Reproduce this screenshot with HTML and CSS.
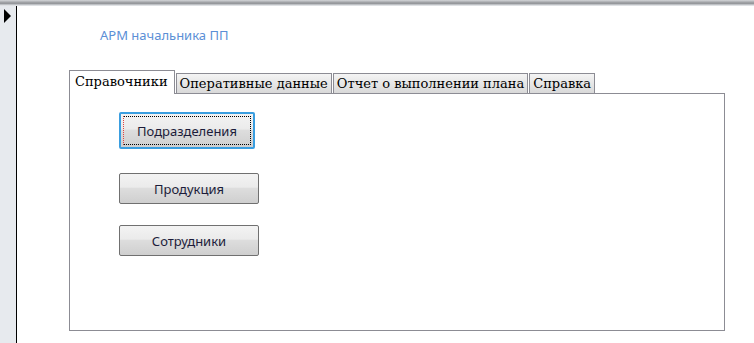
FILE: index.html
```html
<!DOCTYPE html>
<html lang="ru">
<head>
  <meta charset="UTF-8">
  <title>АРМ начальника ПП</title>
  <link rel="stylesheet" href="styles.css">
</head>
<body>
<div class="topbar"></div>
<div class="main">
  <div class="selector"><span class="arrow"></span></div>
  <div class="content">
    <div class="title">АРМ начальника ПП</div>

    <div class="tabs">
      <div class="tab active">Справочники</div>
      <div class="tab">Оперативные данные</div>
      <div class="tab">Отчет о выполнении плана</div>
      <div class="tab">Справка</div>
    </div>

    <div class="panel">
      <button type="button" class="btn focused"><span>Подразделения</span></button>
      <button type="button" class="btn">Продукция</button>
      <button type="button" class="btn">Сотрудники</button>
    </div>
  </div>
</div>
</body>
</html>
```

FILE: styles.css
```css
body {
  margin: 0;
  background-color: #fff;
  font-family: 'Noto Sans', 'Open Sans', sans-serif;
  height: 343px;
  overflow: hidden;
}
.topbar {
  height: 6px;
  background: linear-gradient(#d4d6d9, #8e9094 55%, #c9ccd0 80%, #eef0f2);
}
.main {
  display: flex;
  height: 337px;
}
.selector {
  width: 16px;
  background-color: #e7eaee;
  border-right: 1px solid #000;
  padding-top: 3px;
}
.arrow {
  display: block;
  margin-left: 4px;
  width: 0;
  height: 0;
  border-top: 7px solid transparent;
  border-bottom: 7px solid transparent;
  border-left: 7px solid #000;
}
.content {
  flex: 1;
  padding: 0 0 0 52px;
}
.title {
  margin: 20px 0 0 31px;
  font-size: 13px;
  color: #5b8fd6;
  height: 24px;
}
.tabs {
  display: flex;
  align-items: flex-end;
  margin-top: 20px;
  position: relative;
  z-index: 1;
}
.tab {
  font-family: 'DejaVu Serif', serif;
  font-size: 13px;
  color: #000;
  height: 19px;
  line-height: 19px;
  padding: 0 3px;
  border: 1px solid #8c8c94;
  border-bottom: none;
  background: linear-gradient(#f4f4f4, #d9d9d9);
  margin-right: 1px;
}
.tab.active {
  height: 23px;
  line-height: 22px;
  padding: 0 6px 0 5px;
  background: #fff;
  margin-bottom: -1px;
}
.panel {
  width: 656px;
  height: 238px;
  border: 1px solid #8c8c94;
  display: flex;
  flex-direction: column;
  align-items: flex-start;
  padding-left: 49px;
  box-sizing: border-box;
}
.btn {
  width: 140px;
  height: 31px;
  margin-top: 23px;
  border: 1px solid #707070;
  border-radius: 2px;
  background: linear-gradient(#f3f3f3, #ebebeb 45%, #dddddd 50%, #cfcfcf);
  font-family: 'Noto Sans', 'Open Sans', sans-serif;
  font-size: 13px;
  color: #1c1c3a;
  padding: 0;
}
.btn.focused {
  width: 136px;
  height: 37px;
  margin-top: 18px;
  border: 2px solid #3a9ee0;
  padding: 2px;
}
.btn.focused span {
  display: flex;
  align-items: center;
  justify-content: center;
  height: 100%;
  border: 1px dotted #000;
  border-left-color: #d44;
  box-sizing: border-box;
}
.btn + .btn {
  margin-top: 24px;
}
.btn + .btn + .btn {
  margin-top: 21px;
}
```
